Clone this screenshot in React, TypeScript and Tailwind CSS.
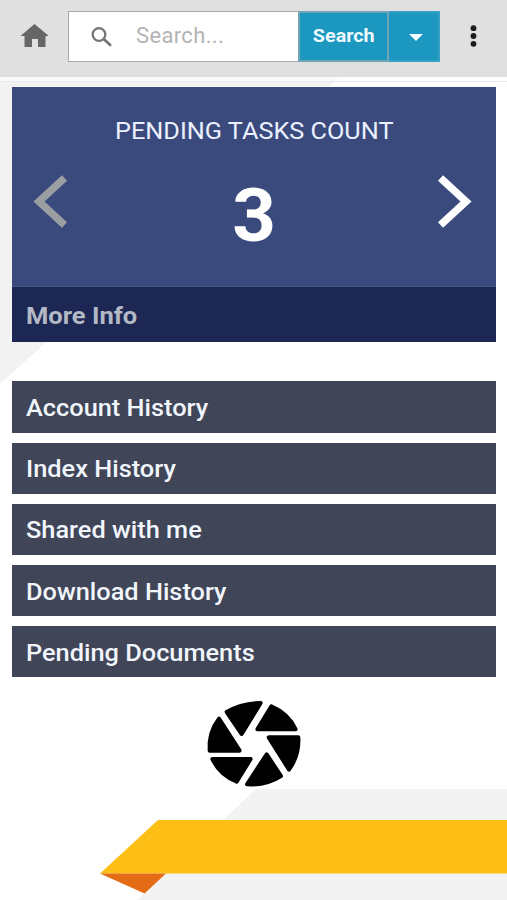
import { useState } from "react";

const MENU = ["Account History", "Index History", "Shared with me", "Download History", "Pending Documents"];

const SLIDES = [{ title: "PENDING TASKS COUNT", count: 3 }];

// blades of the shutter, clockwise from the top
const BLADES = [
  "M110 81 Q155 54 212 54 L155 147 Z",
  "M244 64 Q296 86 317 133 L202 133 Z",
  "M325 157 Q328 211 297 254 L236 157 Z",
  "M273 273 Q227 302 171 298 L230 208 Z",
  "M140 290 Q89 269 67 222 L182 222 Z",
  "M59 197 Q55 142 87 101 L149 197 Z",
];

function Backdrop() {
  return (
    <svg className="absolute inset-0 -z-10 h-full w-full" viewBox="0 0 507 900">
      <path d="M0 76H341L0 384Z" fill="#f2f2f3" />
      <path d="M256 789H507V900H137Z" fill="#f3f3f3" />
      <path d="M158 820H507V873.5H100Z" fill="#fdbf15" />
      <path d="M100 873.5H166L144.500 893.500Z" fill="#e36c14" />
    </svg>
  );
}

function Header() {
  return (
    <header className="flex h-[77px] shrink-0 items-start bg-[#e0e0e0] pt-[11px]">
      <button className="ml-5 mt-[13px]">
        <svg className="h-6 w-7" viewBox="0 0 28 24">
          <path d="M14.500 0L29 12H25.500V23H18V15H12V23H4.500V12H0.500Z" fill="#666" />
        </svg>
      </button>
      <div className="ml-5 flex h-[51px] w-[230px] items-center border-[1.5px] border-r-0 border-[#a9a9a9] bg-white">
        <svg className="ml-[22px] h-5 w-[22px] shrink-0" viewBox="0 0 22 20" fill="none" stroke="#757575">
          <circle cx="8" cy="7.500" r="6.300" strokeWidth="2.300" />
          <path d="M12.500 11.800L20 18.800" strokeWidth="2.800" />
        </svg>
        <input
          className="ml-[23px] w-36 pb-0.5 text-[22px] tracking-[0.35px] outline-none placeholder:text-[#b3b3b3]"
          placeholder="Search..."
        />
      </div>
      <button className="h-[51px] w-[91px] border-2 border-[#71a5b5] bg-[#1c98c0] text-[19px] font-bold text-[#eefaff]">
        <span className="inline-block scale-x-[1.04]">Search</span>
      </button>
      <button className="flex h-[51px] w-[51px] items-center justify-center border-2 border-l-0 border-[#35a0c2] bg-[#1c98c0] pl-1">
        <svg className="mt-0.5 h-[7px] w-[14px]" viewBox="0 0 14 7">
          <path d="M0 0H14L7 7Z" fill="#f0fbff" />
        </svg>
      </button>
      <button className="ml-[30px] mt-[14px]">
        <svg className="h-[22px] w-[7px]" viewBox="0 0 7 22" fill="#1c1c1c">
          <circle cx="3.500" cy="3.200" r="2.900" />
          <circle cx="3.500" cy="11" r="2.900" />
          <circle cx="3.500" cy="18.800" r="2.900" />
        </svg>
      </button>
    </header>
  );
}

function Chevron({ flip }: { flip?: boolean }) {
  return (
    <svg
      className={`h-[54px] w-[35px] ${flip ? "-scale-x-100" : ""}`}
      viewBox="0 0 35 54"
      fill="none"
      stroke={flip ? "#fff" : "#9b9fa3"}
      strokeWidth="7.500"
    >
      <path d="M31.500 3L6 26.500L31.500 50" />
    </svg>
  );
}

export default function App() {
  const [slide, setSlide] = useState(0);
  const { title, count } = SLIDES[slide];

  return (
    <div className="relative isolate flex h-[900px] w-[507px] flex-col overflow-hidden bg-white font-[Roboto,sans-serif]">
      <Backdrop />
      <Header />
      <div className="h-[5px] shrink-0 border-b border-[#e9e9eb] bg-white/60" />

      <main className="flex flex-col pl-3 pr-[11px] pt-[5px]">
        <section className="h-[255px] bg-[#3b4a7c]">
          <div className="flex h-[200px] justify-between border-b border-[#46547f] pl-[21px] pr-6">
            <button className="mt-[30px]" onClick={() => setSlide(Math.max(0, slide - 1))}>
              <Chevron />
            </button>
            <div className="flex flex-col items-center pl-[3px] pt-7 text-white">
              <h2 className="scale-x-[1.053] whitespace-nowrap text-2xl leading-8 text-[#eaf0ff]">{title}</h2>
              <div className="mt-[26px] scale-x-[1.03] text-[74px] font-bold leading-[86px]">{count}</div>
            </div>
            <button className="mt-[30px]" onClick={() => setSlide(Math.min(SLIDES.length - 1, slide + 1))}>
              <Chevron flip />
            </button>
          </div>
          <button className="flex h-[55px] w-full items-center bg-[#1c2853] pl-[14px] pt-0.5 text-2xl font-bold text-[#b3b8c5]">
            <span className="origin-left scale-x-[1.063]">More Info</span>
          </button>
        </section>

        <nav className="mt-[39.4px] flex flex-col gap-[10px]">
          {MENU.map((item) => (
            <button
              key={item}
              className="flex h-[51.2px] items-center bg-[#404558] pl-[14px] pt-0.5 text-2xl font-medium text-[#f1f5fc]"
            >
              <span className="origin-left scale-x-[1.056]">{item}</span>
            </button>
          ))}
        </nav>

        <button className="ml-[178px] mt-[8px] self-start">
          <svg
            className="h-[115px] w-[130px]"
            viewBox="0 0 390 345"
            stroke="#000"
            strokeWidth="12"
            strokeLinejoin="round"
          >
            {BLADES.map((d) => (
              <path key={d} d={d} />
            ))}
          </svg>
        </button>
      </main>
    </div>
  );
}
